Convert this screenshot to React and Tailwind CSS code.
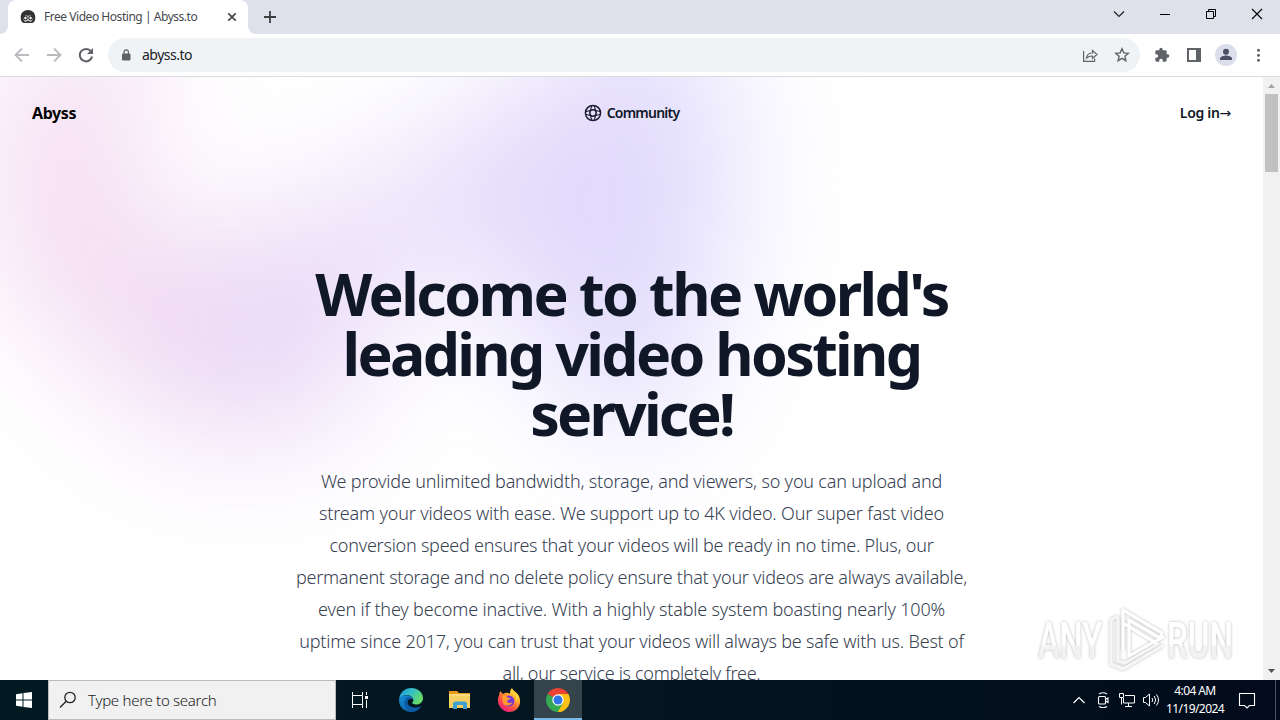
import React from "react";

const sans = "font-['Noto_Sans','Open_Sans',sans-serif]";

function Favicon() {
  return (
    <svg className="h-4 w-4" viewBox="0 0 16 16">
      <path d="M1 11C-.3 5 3 1 8 1s8.300 4 7 10c-.3 2-2 3-3.500 3h-7C3 14 1.300 13 1 11z" fill="#333" />
      <path d="M4.500 7l1.500-1 2 1 2-1 1.500 1 1.500 3-2 3h-6l-2-3z" fill="#bbb" />
      <circle cx="5.400" cy="9" r="1.800" fill="#eee" stroke="#222" />
      <circle cx="10.600" cy="9" r="1.800" fill="#eee" stroke="#222" />
      <path d="M6.500 12.500h3M2 12l2 1.500M14 12l-2 1.500" stroke="#333" />
    </svg>
  );
}

function TabStrip() {
  return (
    <div className="flex h-[34px] shrink-0 bg-[#dee1e9]">
      <div className="w-2 bg-white">
        <div className="h-full rounded-br-lg bg-[#dee1e9]" />
      </div>
      <div className="flex w-60 items-center rounded-t-lg bg-white pl-3 pr-[10px]">
        <Favicon />
        <span className="ml-2 w-[180px] whitespace-nowrap text-[12px] tracking-[-0.46px] text-[#45494d]">Free Video Hosting | Abyss.to</span>
        <svg className="ml-auto h-3 w-3" viewBox="0 0 12 12" stroke="#45494d" strokeWidth="1.700"><path d="M2.300 2.300l7.400 7.400M9.700 2.300l-7.400 7.400" /></svg>
      </div>
      <div className="w-2 bg-white">
        <div className="h-full rounded-bl-lg bg-[#dee1e9]" />
      </div>
      <svg className="ml-[7px] mt-[10px] h-[14px] w-[14px]" viewBox="0 0 14 14" stroke="#3c4043" strokeWidth="1.800"><path d="M7 1v12M1 7h12" /></svg>
      <div className="ml-auto flex h-7 items-center">
        <svg className="h-7 w-[46px]" viewBox="0 0 46 28" fill="none" stroke="#222" strokeWidth="1.200"><path d="M18 11.500l5 5 5-5" /></svg>
        <svg className="h-7 w-[46px]" viewBox="0 0 46 28" stroke="#000"><path d="M18 14.500h10" /></svg>
        <svg className="h-7 w-[46px]" viewBox="0 0 46 28" fill="none" stroke="#000"><path d="M18.500 11.500h7v7h-7zM20.500 11.500v-2h7v7h-2" /></svg>
        <svg className="h-7 w-[46px]" viewBox="0 0 46 28" stroke="#000" strokeWidth="1.100"><path d="M18 9l10 10M28 9L18 19" /></svg>
      </div>
    </div>
  );
}

function Toolbar() {
  return (
    <div className="flex h-[43px] shrink-0 items-center border-b border-[#dadce0] bg-white pl-[14px]">
      <svg className="h-4 w-4" viewBox="0 0 16 16" fill="none" stroke="#b9bbbe" strokeWidth="1.800"><path d="M15 8H2M8 1.500L1.500 8 8 14.500" /></svg>
      <svg className="ml-4 h-4 w-4" viewBox="0 0 16 16" fill="none" stroke="#b9bbbe" strokeWidth="1.800"><path d="M1 8h13M8 1.500L14.500 8 8 14.500" /></svg>
      <svg className="ml-4 h-4 w-4" viewBox="0 0 16 16"><path d="M13 4.400A6.200 6.200 0 1 0 14.100 9.500" fill="none" stroke="#5f6368" strokeWidth="2" /><path d="M15 1v6H9z" fill="#5f6368" /></svg>
      <div className="ml-[14px] flex h-[34px] w-[1032px] items-center rounded-full bg-[#f0f3f6] pl-3 pr-[10px]">
        <svg className="h-3 w-3" viewBox="0 0 12 12"><rect x="2" y="4.500" width="8.500" height="7" rx="1" fill="#5f6368" /><path d="M4 5V3a2.200 2.200 0 0 1 4.400 0v2" fill="none" stroke="#5f6368" strokeWidth="1.200" /></svg>
        <span className="ml-[10px] pb-px text-[14px] tracking-[-0.5px] text-[#202124]">abyss.to</span>
        <svg className="ml-auto h-4 w-4" viewBox="0 0 16 16" fill="none" stroke="#5f6368" strokeWidth="1.200"><path d="M1.600 4v10.400h11V11.500M4.500 11C5 7.500 7 6 10.500 6V3.500L15 7.500l-4.500 4V9C8 9 6 9.500 4.500 11z" /></svg>
        <svg className="ml-4 h-4 w-4" viewBox="0 0 16 16" fill="none" stroke="#5f6368" strokeWidth="1.400"><path d="M8 1.800l1.800 4.100 4.500.4-3.400 3 1 4.400L8 11.400l-3.900 2.300 1-4.400-3.400-3 4.500-.4z" /></svg>
      </div>
      <svg className="ml-[14px] h-4 w-4" viewBox="0 0 24 24" fill="#5f6368"><path d="M20.500 11H19V7a2 2 0 0 0-2-2h-4V3.500a2.500 2.500 0 0 0-5 0V5H4a2 2 0 0 0-2 2v3.800h1.500a2.700 2.700 0 0 1 0 5.400H2V20a2 2 0 0 0 2 2h3.800v-1.500a2.700 2.700 0 0 1 5.400 0V22H17a2 2 0 0 0 2-2v-4h1.500a2.500 2.500 0 0 0 0-5z" /></svg>
      <svg className="ml-[17px] h-[14px] w-[14px]" viewBox="0 0 14 14"><path d="M0 0h14v14H0zM2 2v10h7V2z" fill="#5f6368" fillRule="evenodd" /></svg>
      <svg className="ml-[14px] h-[22px] w-[22px]" viewBox="0 0 22 22"><circle cx="11" cy="11" r="11" fill="#dcdfeb" /><circle cx="11" cy="7.700" r="3" fill="#4b5066" /><path d="M5 16v-1.500c0-2 4-3 6-3s6 1 6 3V16z" fill="#4b5066" /></svg>
      <svg className="ml-[14px] h-4 w-[14px]" viewBox="0 0 14 16" fill="#5f6368"><circle cx="7.500" cy="3.300" r="1.500" /><circle cx="7.500" cy="8.300" r="1.500" /><circle cx="7.500" cy="13.300" r="1.500" /></svg>
    </div>
  );
}

function Backdrop() {
  return (
    <div className="absolute inset-x-0 -top-80 overflow-hidden blur-3xl">
      <svg className="relative left-[calc(50%-28.5rem)] top-3 h-[42.375rem] max-w-none -translate-x-1/2 rotate-[30deg]" viewBox="0 0 1155 678">
        <path fill="url(#glow)" fillOpacity=".3" d="M317.219 518.975L203.852 678 0 438.341l317.219 80.634 204.172-286.402c1.307 132.337 45.083 346.658 209.733 145.248C936.936 126.058 882.053-94.234 1031.02 41.331c119.18 108.451 130.68 295.337 121.53 375.223L855 299l21.173 362.054-558.954-142.079z" />
        <defs>
          <linearGradient id="glow" x1="1155.49" x2="-78.208" y1=".177" y2="474.645" gradientUnits="userSpaceOnUse">
            <stop stopColor="#9089fc" />
            <stop offset=".3" stopColor="#a37cec" />
            <stop offset=".5" stopColor="#cf7fd6" />
            <stop offset=".75" stopColor="#f080c0" />
            <stop offset="1" stopColor="#ff80b5" />
          </linearGradient>
        </defs>
      </svg>
    </div>
  );
}

function Watermark() {
  return (
    <svg className="absolute bottom-0 right-0 h-[92px] w-[243px]" viewBox="0 0 243 92">
      <defs>
        <linearGradient id="fade" x1="0" y1="0" x2="0" y2="1">
          <stop offset=".55" stopColor="#fff" /><stop offset=".6" stopColor="#f3f2f3" />
        </linearGradient>
        <filter id="soft" x="-10%" y="-20%" width="120%" height="140%"><feDropShadow dx="0" dy="0" stdDeviation="1.500" floodColor="#777" floodOpacity=".55" /></filter>
      </defs>
      <g filter="url(#soft)" fill="url(#fade)" fontFamily="Roboto, sans-serif" fontSize="50" fontWeight="500">
        <text x="18" y="70" textLength="64" lengthAdjust="spacingAndGlyphs">ANY</text>
        <text x="147" y="70" textLength="66" lengthAdjust="spacingAndGlyphs">RUN</text>
        <g fill="none" stroke="#fff" strokeWidth="3" strokeLinejoin="round" strokeLinecap="round">
          <path d="M103 22l39 23-2 5-31-18v36l34-19M103 22v13l33 20M103 35v26" />
          <path d="M96 29l-5 3v44l12 5 39-23M98 30v43l7 2 33-19" stroke="#f7f6f7" />
        </g>
      </g>
    </svg>
  );
}

function Page() {
  return (
    <div className="flex min-h-0 flex-1 bg-white">
      <main className="relative min-w-0 flex-1 overflow-hidden">
        <Backdrop />
        <div className="relative flex h-[72px] items-center justify-between px-8 text-[14px] font-semibold text-gray-900">
          <span className="w-24 text-[16px] font-bold tracking-[-0.4px] text-black">Abyss</span>
          <div className="flex items-center gap-[5px]">
            <svg className="h-[18px] w-[18px]" viewBox="0 0 18 18" fill="none" stroke="#211c35" strokeWidth="1.500"><circle cx="9" cy="9" r="7.600" /><circle cx="9" cy="9" r="3.200" /><path d="M7.800 1.800L6.300 6.700M10.200 1.800l1.500 4.900M7.800 16.200l-1.500-4.900M10.200 16.200l1.500-4.900M1.800 7.800l4.900-1.500M1.800 10.200l4.900 1.500M16.200 7.800l-4.900-1.500M16.200 10.200l-4.900 1.500" strokeWidth="1.100" /></svg>
            <span className="whitespace-nowrap pb-px tracking-[-0.78px]">Community</span>
          </div>
          <span className="w-24 whitespace-nowrap pb-px text-right tracking-[-0.3px]">Log in<span className="font-['DejaVu_Sans'] text-[14px] font-normal">→</span></span>
        </div>
        <h1 className="relative mt-[114px] flex flex-col items-center whitespace-nowrap text-[59px] font-bold leading-[60px] text-gray-900">
          <span className="tracking-[-2.55px]">Welcome to the world's</span>
          <span className="tracking-[-2.67px]">leading video hosting</span>
          <span className="tracking-[-2.8px]">service!</span>
        </h1>
        <p className="relative mt-[22px] flex flex-col items-center whitespace-nowrap text-[18px] font-light leading-8 text-[#374151]">
          <span className="tracking-[-0.18px]">We provide unlimited bandwidth, storage, and viewers, so you can upload and</span>
          <span className="tracking-[-0.18px]">stream your videos with ease. We support up to 4K video. Our super fast video</span>
          <span className="tracking-[-0.24px]">conversion speed ensures that your videos will be ready in no time. Plus, our</span>
          <span className="tracking-[-0.26px]">permanent storage and no delete policy ensure that your videos are always available,</span>
          <span className="tracking-[-0.18px]">even if they become inactive. With a highly stable system boasting nearly 100%</span>
          <span className="tracking-[-0.21px]">uptime since 2017, you can trust that your videos will always be safe with us. Best of</span>
          <span className="tracking-[-0.3px]">all, our service is completely free.</span>
        </p>
        <Watermark />
      </main>
      <div className="flex w-[17px] flex-col items-center bg-[#f1f1f1]">
        <svg className="h-[17px] w-[17px] shrink-0" viewBox="0 0 17 17"><path d="M5 11h7L8.500 7z" fill="#a3a3a3" /></svg>
        <div className="h-[78px] w-[13px] bg-[#c1c1c1]" />
        <svg className="mt-auto h-[17px] w-[17px]" viewBox="0 0 17 17"><path d="M5 6h7l-3.500 4z" fill="#505050" /></svg>
      </div>
    </div>
  );
}

function EdgeIcon() {
  return (
    <svg className="h-6 w-6" viewBox="0 0 24 24">
      <defs>
        <linearGradient id="edgeTop" x1="0" y1="0" x2="1" y2=".5"><stop stopColor="#1796d4" /><stop offset=".5" stopColor="#35bfc8" /><stop offset="1" stopColor="#67dc68" /></linearGradient>
        <linearGradient id="edgeLow" x1="0" y1="0" x2="1" y2="1"><stop stopColor="#1690dc" /><stop offset="1" stopColor="#0b4d91" /></linearGradient>
      </defs>
      <path d="M.1 11C.8 4.500 6 0 12.200 0 19 0 24 4.800 24 10c0 4-3 6.500-6.500 6.500-3 0-4.500-1-4.300-2 1.500-1 1.500-3 .5-4.500C11 6 4 6 .1 11z" fill="url(#edgeTop)" />
      <path d="M.1 11C2 7.600 5 7 8 7.200c3 .3 5.400 1.800 6 4.300-2-1.500-5-.8-5.600 1.800-.9 4 4.500 8.700 11.600 5.700l2-.7C20 22 16 24 12 24 5 24-.6 18.500.1 11z" fill="url(#edgeLow)" />
      <path d="M9 9c-4 2-4.500 7-2 11 1.300 2 3.300 3.500 6 4 4-.2 7-2.500 9-6-6 3.500-15 .7-13.500-5 .4-1.700 2-2.500 3.500-2.500C11.500 9.500 10.300 8.800 9 9z" fill="#0d5ba6" />
    </svg>
  );
}

function FolderIcon() {
  return (
    <svg className="h-6 w-6" viewBox="0 0 24 24">
      <path d="M1 3h8l2 2h11v5H1z" fill="#e89b18" />
      <path d="M1 6h21v14H1z" fill="#f8cf62" />
      <path d="M1 6h21v2H1z" fill="#ffdb80" />
      <path d="M5 21v-6l2-1.500h10l2 1.500v6h-4v-4H9v4z" fill="#3f9fd0" />
      <path d="M9 17v3h6v-3z" fill="#f8cf62" />
    </svg>
  );
}

function FirefoxIcon() {
  return (
    <svg className="h-6 w-6" viewBox="0 0 24 24">
      <defs><linearGradient id="fox" x1=".9" y1="0" x2=".2" y2="1"><stop stopColor="#fff44f" /><stop offset=".35" stopColor="#ffb12b" /><stop offset=".65" stopColor="#ff5540" /><stop offset="1" stopColor="#e31587" /></linearGradient></defs>
      <path d="M2 7.500L3 3l3 3 2-1c2-.5 3.500 0 5 .5 0-2 .5-4 2-5.500 1 3 5 4 7 8 3.500 8-1.500 16-10 16C4 24-1.500 15 2 7.500z" fill="url(#fox)" />
      <circle cx="12" cy="13" r="5.400" fill="#7a38d8" />
      <path d="M5 8c3-1 4.500 0 5.500 1.500 1 .3 2 .3 3 .8-1 1.700-3 1.400-3.500 2.800 0 2 3 2.500 5.500 1.500C14 18 8 19 6 15z" fill="#ff9a32" />
      <path d="M14 5c4 1 6 5 4.500 9 2-1 2.500-4 2-6-1.500-2-4-4-6.500-3z" fill="#ffd33d" />
    </svg>
  );
}

function ChromeIcon() {
  return (
    <svg className="h-6 w-6" viewBox="0 0 24 24">
      <path d="M12 12L1.610 6A12 12 0 0 1 22.390 6z" fill="#ea4335" />
      <path d="M12 12L22.390 6A12 12 0 0 1 12 24z" fill="#fbc116" />
      <path d="M12 12v12A12 12 0 0 1 1.610 6z" fill="#34a853" />
      <path d="M12 6h10.390l-5.200 9z" fill="#fbc116" />
      <path d="M12 6h10.390L12 2z" fill="#ea4335" />
      <path d="M17.200 15L12 24l-5.200-9z" fill="#34a853" />
      <path d="M17.200 15L12 24c3 0 6-1 8-3.500z" fill="#fbc116" />
      <circle cx="12" cy="12" r="5.700" fill="#fff" />
      <circle cx="12" cy="12" r="4.500" fill="#2f75e8" />
    </svg>
  );
}

function Taskbar() {
  return (
    <div className="flex h-10 shrink-0 items-center bg-gradient-to-r from-[#011a22] via-[#04151f] to-[#020b1b] text-white">
      <div className="flex w-12 justify-center">
        <svg className="h-4 w-4" viewBox="0 0 16 16" fill="#fff"><path d="M0 2.200l6.500-.9v6.200H0zM7.500 1.100L16 0v7.500H7.500zM0 8.500h6.500v6.200L0 13.800zM7.500 8.500H16V16l-8.500-1.100z" /></svg>
      </div>
      <div className="flex h-10 w-72 items-center border border-[#b9bcbd] bg-[#f1f1f1] pl-[10px]">
        <svg className="h-[18px] w-[18px]" viewBox="0 0 18 18" fill="none" stroke="#222" strokeWidth="1.300"><circle cx="11" cy="6.500" r="5.200" /><path d="M7.200 10.200L1 16.500" /></svg>
        <span className="ml-[11px] whitespace-nowrap text-[15px] font-light tracking-[-0.28px] text-[#222]">Type here to search</span>
      </div>
      <div className="flex w-12 justify-center">
        <svg className="h-4 w-[18px]" viewBox="0 0 18 16" fill="none" stroke="#fff"><path d="M1.500 0v3.500h10V0M1.500 16v-3.500h10V16M1.500 3.500v9M11.500 3.500v9M15.500 0v3M15.500 8v8" /><path d="M14 4h3v3h-3z" fill="#fff" stroke="none" /></svg>
      </div>
      <div className="flex w-[54px] justify-center"><EdgeIcon /></div>
      <div className="flex w-[44px] justify-center"><FolderIcon /></div>
      <div className="flex w-[52px] justify-center pl-px"><FirefoxIcon /></div>
      <div className="flex h-10 w-12 items-center justify-center border-b-2 border-[#76b9ed] bg-[#35434d] pt-0.5"><ChromeIcon /></div>
      <div className="ml-auto flex items-center">
        <svg className="h-4 w-4" viewBox="0 0 16 16" fill="none" stroke="#fff" strokeWidth="1.200"><path d="M2.500 11L8 5.500 13.500 11" /></svg>
        <svg className="ml-2 h-4 w-4" viewBox="0 0 16 16" fill="none" stroke="#fff" strokeWidth="1.100"><rect x="3.500" y="4.500" width="7" height="7.500" rx="1" /><path d="M10.500 7.500l2.500-1.500v4.500l-2.500-1.500M4 2q4-2.500 8 0M4 14.500q4 2.500 8 0" /></svg>
        <svg className="ml-2 h-4 w-4" viewBox="0 0 16 16" fill="none" stroke="#fff"><path d="M6 3.500h9.500v7.500H4.500V6M9.500 11v3M6 14.500h7M.5 1.500h4v4h-4zM2.500 5.500v7" /></svg>
        <svg className="ml-[7px] h-4 w-[18px]" viewBox="0 0 18 16" fill="none" stroke="#fff"><path d="M1.500 5.500h2l4-3.500v12l-4-3.500h-2zM10 6q1.500 2 0 4M12.200 4q3 4 0 8M14.500 2.500q4 5.500 0 11" /></svg>
        <div className="ml-[3px] flex w-[64px] flex-col items-center whitespace-nowrap text-[12px] leading-[18px] tracking-[-0.6px]"><span>4:04 AM</span><span>11/19/2024</span></div>
        <svg className="ml-[11px] h-[18px] w-[18px]" viewBox="0 0 18 18" fill="none" stroke="#fff" strokeWidth="1.100"><path d="M1.500 2.500h15v12h-5L9 17l-2.500-2.500h-5z" /></svg>
        <div className="ml-[19px] h-10 w-px bg-[#4a5364]" />
        <div className="w-1" />
      </div>
    </div>
  );
}

export default function App() {
  return (
    <div className={"flex h-[720px] w-[1280px] flex-col overflow-hidden " + sans}>
      <TabStrip />
      <Toolbar />
      <Page />
      <Taskbar />
    </div>
  );
}
